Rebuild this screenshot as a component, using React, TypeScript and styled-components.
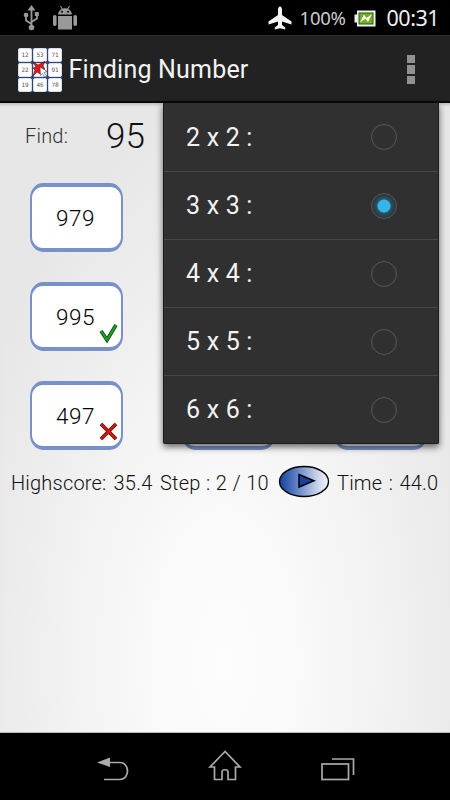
import React from "react";
import styled, { createGlobalStyle } from "styled-components";

const GlobalStyle = createGlobalStyle`
  * { box-sizing: border-box; }
  body { margin: 0; background: #000; font-family: Roboto, "Noto Sans", sans-serif; }
`;

const Screen = styled.div`
  width: 450px;
  height: 800px;
  display: flex;
  flex-direction: column;
  background: #000;
  overflow: hidden;
`;

const StatusBar = styled.header`
  height: 35px;
  flex: none;
  display: flex;
  align-items: center;
  padding: 1px 11px 0 23px;
  font-family: "Noto Sans", sans-serif;
  color: #eee;
`;

const Label = styled.span<{
  $size: number;
  $spacing?: number;
  $word?: number;
  $weight?: number;
  $left?: number;
  $color?: string;
}>`
  font-size: ${(p) => p.$size}px;
  line-height: 1;
  letter-spacing: ${(p) => p.$spacing ?? 0}px;
  word-spacing: ${(p) => p.$word ?? 0}px;
  font-weight: ${(p) => p.$weight ?? 400};
  margin-left: ${(p) => p.$left ?? 0}px;
  color: ${(p) => p.$color ?? "inherit"};
  white-space: nowrap;
`;

const Glyph = styled.svg<{ $left?: number }>`
  display: block;
  flex: none;
  margin-left: ${(p) => p.$left ?? 0}px;
`;

const Spacer = styled.div`
  flex: 1;
`;

const ActionBar = styled.div`
  height: 68px;
  flex: none;
  display: flex;
  align-items: center;
  padding: 2px 35px 0 18px;
  background: #222;
  border-top: 1px solid #303030;
  border-bottom: 2px solid #080808;
  color: #f3f3f3;
`;

const AppIcon = styled.div`
  width: 44px;
  height: 44px;
  position: relative;
  display: grid;
  grid-template-columns: repeat(3, 14px);
  grid-template-rows: repeat(3, 14px);
  gap: 1px;
  background: #34466e;
  border-radius: 2px;
`;

const IconCell = styled.span`
  display: flex;
  align-items: center;
  justify-content: center;
  background: #fff;
  border: 1px solid #d5def0;
  border-radius: 2px;
  font: 6px "DejaVu Sans Mono", monospace;
  color: #555;
`;

const Splat = styled.svg`
  position: absolute;
  left: 14px;
  top: 13px;
`;

const Overflow = styled.div`
  display: grid;
  gap: 2px;
`;

const Dot = styled.i`
  width: 8px;
  height: 8.5px;
  background: #919191;
`;

const Content = styled.main`
  height: 630px;
  flex: none;
  position: relative;
  background: radial-gradient(ellipse 270px 560px at 50% 89%, #fdfdfd 0%, #fbfbfb 20%, #f3f3f3 55%, #ececec 80%, #e7e7e7 100%);
  border-bottom: 1px solid #bbb;
  box-shadow: inset 0 4px 3px -2px rgba(0, 0, 0, 0.18);
  color: #111;
`;

const FindRow = styled.div`
  height: 79.5px;
  display: flex;
  align-items: flex-start;
  padding: 15px 0 0 25px;
`;

const FindLabel = styled.div`
  padding-top: 8px;
  width: 81px;
  display: flex;
`;

const FindValue = styled.div`
  padding-top: 1px;
  display: flex;
`;

const Board = styled.div`
  display: grid;
  grid-template-columns: repeat(3, 93px);
  grid-auto-rows: 69.5px;
  column-gap: 59px;
  row-gap: 29.5px;
  padding-left: 30px;
`;

const Tile = styled.div`
  position: relative;
  display: flex;
  align-items: center;
  justify-content: center;
  border: solid #7892c9;
  border-width: 4px 2.5px;
  border-radius: 13px / 15px;
  background: #fff;
  font-size: 22.5px;
  font-weight: 300;
  letter-spacing: 0.5px;
  color: #000;
  padding: 1px 2px 0 0;
`;

const Mark = styled.svg`
  position: absolute;
  right: 3px;
  bottom: 4px;
`;

const ScoreRow = styled.div`
  height: 63px;
  display: grid;
  grid-template-columns: 149px 118px 59px auto;
  align-items: center;
  padding-left: 11px;
`;

const ScoreText = styled.div`
  display: flex;
  padding-top: 2px;
`;

const Menu = styled.div`
  position: absolute;
  left: 163px;
  top: 0;
  width: 276px;
  height: 341px;
  display: grid;
  grid-template-rows: repeat(5, 1fr);
  background: #303030;
  border: solid #1d1d1d;
  border-width: 0 1px 1px;
  border-radius: 0 0 2px 2px;
  box-shadow: 0 3px 7px rgba(0, 0, 0, 0.6);
  color: #f3f3f3;
`;

const MenuItem = styled.div`
  display: flex;
  align-items: center;
  justify-content: space-between;
  padding: 0 41px 0 22px;
  & + & { border-top: 1px solid #484848; }
`;

const Radio = styled.span<{ $on: boolean }>`
  width: 26px;
  height: 26px;
  border: 1.5px solid #585858;
  border-radius: 50%;
  background: ${(p) =>
    p.$on
      ? "radial-gradient(circle, #33b5e5 0 6px, #28566a 7px, #2b4652 9px, #303030 13px)"
      : "transparent"};
`;

const NavBar = styled.nav`
  height: 67px;
  flex: none;
  display: flex;
  align-items: flex-start;
  padding: 9px 0 0 96px;
`;

const iconNumbers = ["12", "53", "71", "22", "", "91", "19", "46", "78"];

const tiles: { value: string; mark?: "right" | "wrong" }[] = [
  { value: "979" }, { value: "" }, { value: "" },
  { value: "995", mark: "right" }, { value: "" }, { value: "" },
  { value: "497", mark: "wrong" }, { value: "" }, { value: "" },
];

const sizes = [2, 3, 4, 5, 6];

function AnswerMark({ kind }: { kind: "right" | "wrong" }) {
  const d = kind === "right" ? "M2 8 L8 17 L17 2" : "M2 2 L17 17 M17 2 L2 17";
  return (
    <Mark width="19" height="20" viewBox="0 0 19 20" fill="none">
      <path d={d} stroke={kind === "right" ? "#164f18" : "#5b100b"} strokeWidth="3.7" />
      <path d={d} stroke={kind === "right" ? "#16a51c" : "#d51b0d"} strokeWidth="2" />
    </Mark>
  );
}

export default function App() {
  return (
    <Screen>
      <GlobalStyle />
      <StatusBar>
        <Glyph width="16" height="26" viewBox="0 0 16 26" fill="none" stroke="#999" strokeWidth="1.8">
          <path d="M8.5 22V4M8.5 19L3 15.5V10M8.5 17L14 13.5V9" />
          <path d="M8.5 0L12.5 5.5H4.5Z" fill="#999" stroke="none" />
          <circle cx="8.5" cy="22.5" r="2.8" fill="#999" stroke="none" />
          <circle cx="3" cy="10" r="2.3" fill="#999" stroke="none" />
          <rect x="11.8" y="7" width="4" height="4" fill="#999" stroke="none" />
        </Glyph>
        <Glyph $left={13} width="26" height="26" viewBox="0 0 26 26" fill="#999">
          <path d="M6 9.5C6.2 6.7 7.6 4.9 9.7 3.9L8 1.2L8.8.7L10.7 3.5Q13 2.8 15.3 3.5L17.2.7L18 1.2L16.3 3.9C18.4 4.9 19.8 6.7 20 9.5Z" />
          <rect x="6" y="11" width="14" height="13.5" />
          <rect x="1" y="10" width="3.6" height="11" rx="1.7" />
          <rect x="21.4" y="10" width="3.6" height="11" rx="1.7" />
          <circle cx="10" cy="6.8" r="1" fill="#000" />
          <circle cx="16" cy="6.8" r="1" fill="#000" />
        </Glyph>
        <Spacer />
        <Glyph width="24" height="24" viewBox="0 0 24 24" fill="#f5f5f5">
          <path d="M12 .5C10.8.5 10 2 10 4V9L.5 15.5V18.5L10 15.5V19L6.8 21.5V23.5L12 22.2L17.2 23.5V21.5L14 19V15.5L23.5 18.5V15.5L14 9V4C14 2 13.2.5 12 .5Z" />
        </Glyph>
        <Label $size={18.5} $left={8} $spacing={-0.3} $color="#ccc">100%</Label>
        <Glyph $left={8} width="22" height="17" viewBox="0 0 22 17">
          <path d="M3 .5H21.5V16.5H3V12.5H.5V4.5H3Z" fill="#f1f1f1" />
          <rect x="4.5" y="2.5" width="15" height="12" fill="#315a10" />
          <rect x="5.5" y="3.5" width="13" height="10" fill="#70ae25" />
          <path d="M6 12.5L10 4.5L12.5 8L18 4L14 12L11.2 8.8Z" fill="#fff" />
        </Glyph>
        <Label $size={21.5} $left={11} $spacing={-0.5}>00:31</Label>
      </StatusBar>

      <ActionBar>
        <AppIcon>
          {iconNumbers.map((n, i) => <IconCell key={i}>{n}</IconCell>)}
          <Splat width="17" height="17" viewBox="0 0 17 17">
            <path d="M1 1L6 4L8 3L13 0L11 5L13 8L10 10L8 13L5 11L1 15L3 9L1 7L4 6Z" fill="#df1717" stroke="#5b1414" strokeWidth=".6" />
            <path d="M8 6L15 10.5L12 11.5L14.5 15L12.5 16L10.5 12.5L8.5 14.5Z" fill="#fff" stroke="#444" strokeWidth=".6" />
          </Splat>
        </AppIcon>
        <Label $size={25} $left={6.5} $spacing={0.2}>Finding Number</Label>
        <Spacer />
        <Overflow><Dot /><Dot /><Dot /></Overflow>
      </ActionBar>

      <Content>
        <FindRow>
          <FindLabel>
            <Label $size={20} $weight={300} $spacing={0.2} $color="#333">Find:</Label>
          </FindLabel>
          <FindValue>
            <Label $size={35} $weight={300}>95</Label>
          </FindValue>
        </FindRow>
        <Board>
          {tiles.map((t, i) => (
            <Tile key={i}>
              {t.value}
              {t.mark && <AnswerMark kind={t.mark} />}
            </Tile>
          ))}
        </Board>
        <ScoreRow>
          <ScoreText>
            <Label $size={20} $weight={300} $spacing={0.2} $word={2}>Highscore: 35.4</Label>
          </ScoreText>
          <ScoreText>
            <Label $size={20} $weight={300} $spacing={0.2} $word={0.4}>Step : 2 / 10</Label>
          </ScoreText>
          <Glyph width="52" height="33" viewBox="0 0 52 33">
            <defs>
              <linearGradient id="play">
                <stop offset="0" stopColor="#1640a0" />
                <stop offset=".3" stopColor="#5578bd" />
                <stop offset=".75" stopColor="#c3cfe8" />
                <stop offset="1" stopColor="#f4f6fc" />
              </linearGradient>
            </defs>
            <ellipse cx="26" cy="16.5" rx="24.5" ry="15" fill="url(#play)" stroke="#000" strokeWidth="1.4" />
            <path d="M21 9.5L36 15.7L21 22Z" fill="#1740a0" stroke="#000" strokeWidth="1.5" />
          </Glyph>
          <ScoreText>
            <Label $size={20} $weight={300} $spacing={0.2} $word={1.3}>Time : 44.0</Label>
          </ScoreText>
        </ScoreRow>

        <Menu>
          {sizes.map((n) => (
            <MenuItem key={n}>
              <Label $size={25} $spacing={0.2}>{`${n} x ${n} :`}</Label>
              <Radio $on={n === 3} />
            </MenuItem>
          ))}
        </Menu>
      </Content>

      <NavBar>
        <Glyph width="34" height="40" viewBox="0 0 34 40" fill="none" stroke="#aaa" strokeWidth="1.7">
          <path d="M12 20.5H24C34 20.5 34 37.5 24 37.5H8" />
          <path d="M1 20.5L14 15.5V25Z" fill="#aaa" stroke="none" />
        </Glyph>
        <Glyph $left={78} width="34" height="40" viewBox="0 0 34 40" fill="none" stroke="#aaa" strokeWidth="1.7">
          <path d="M17 9.5L2 25H6.5V37.5H14V30C14 27 20 27 20 30V37.5H27.5V25H32Z" />
        </Glyph>
        <Glyph $left={78} width="36" height="40" viewBox="0 0 36 40" fill="none" stroke="#aaa" strokeWidth="1.7">
          <rect x="2" y="22" width="26.5" height="15.5" />
          <path d="M12 17H33.5V33" />
        </Glyph>
      </NavBar>
    </Screen>
  );
}
